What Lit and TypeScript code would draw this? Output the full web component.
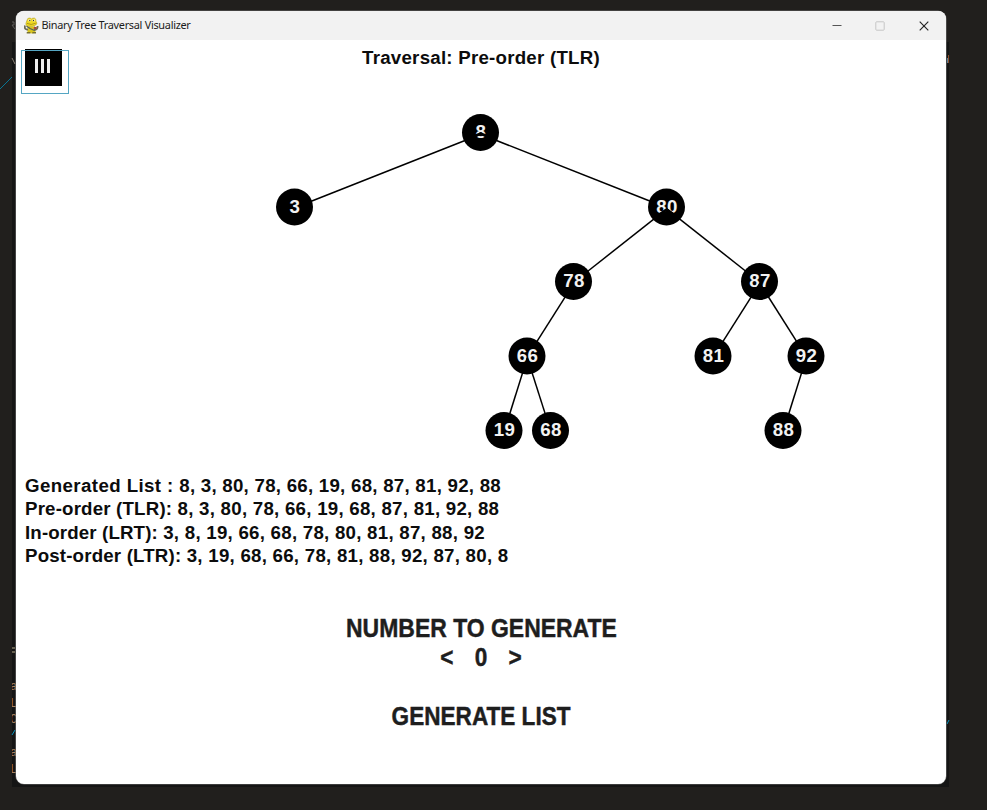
import { LitElement, html, svg, css } from "lit";
import { customElement } from "lit/decorators.js";

interface TreeNode {
  value: number;
  x: number;
  y: number;
  parent?: number;
}

const NODES: TreeNode[] = [
  { value: 8, x: 464.5, y: 92.5 },
  { value: 3, x: 278.5, y: 167, parent: 0 },
  { value: 80, x: 650.5, y: 167, parent: 0 },
  { value: 78, x: 557.5, y: 241.5, parent: 2 },
  { value: 87, x: 743.5, y: 241.5, parent: 2 },
  { value: 66, x: 511, y: 316, parent: 3 },
  { value: 81, x: 697, y: 316, parent: 4 },
  { value: 92, x: 790, y: 316, parent: 4 },
  { value: 19, x: 488, y: 390.5, parent: 5 },
  { value: 68, x: 534.5, y: 390.5, parent: 5 },
  { value: 88, x: 767, y: 390.5, parent: 7 },
];

@customElement("title-bar")
class TitleBar extends LitElement {
  static styles = css`
    :host { display: flex; align-items: center; height: 29px; background: #f2f2f2; font-family: "Noto Sans", sans-serif; }
    .logo { width: 15px; height: 17px; margin-left: 8px; }
    .title { flex: 1; margin: -2px 0 0 2.5px; font-size: 10.9px; letter-spacing: -0.29px; color: #1b1b1b; white-space: pre; }
    .controls { display: flex; margin-right: .5px; }
    .control { width: 43.5px; height: 29px; display: grid; place-items: center; }
  `;
  render() {
    return html`
      <svg class="logo" viewBox="0 0 15 17">
        <path d="M3.5 9.5L11 9.5L11.5 15.5L8 16.5L3.5 15.5Z" fill="#d8c51f"/>
        <path d="M1 8.5Q0 13 4 12.5M10 13Q14 13 13.5 9" fill="none" stroke="#6b6a55" stroke-width="1.8"/>
        <path d="M2.5 9L6 11.5L10.5 13.5" fill="none" stroke="#55605a" stroke-width="1.3"/>
        <path d="M10 9.8L13 10.3L12.4 12.2L9.6 11.7Z" fill="#a8483f"/>
        <path d="M3 3.2Q3.4.8 5.7 1Q7 1 7.5 2Q8.6.6 10.7 1.2Q12.5 2 11.9 4.2Q14 6.2 11.8 8Q9 10 4.5 9.3Q.9 8.6 2.2 5.6Z" fill="#efd922" stroke="#a6951d" stroke-width=".5"/>
        <path d="M3 6.4Q7 8.6 11.8 6.2" fill="none" stroke="#a4921c" stroke-width=".9"/>
        <circle cx="5.5" cy="3.3" r="1.3" fill="#fbf3a4"/><circle cx="9.8" cy="3.3" r="1.3" fill="#fbf3a4"/>
        <circle cx="5.8" cy="3.5" r=".65" fill="#333"/><circle cx="9.5" cy="3.5" r=".65" fill="#333"/>
        <path d="M2.7 15.8H6.4M8.3 15.8H12" stroke="#77702f" stroke-width="1.4"/>
      </svg>
      <div class="title">Binary Tree Traversal Visualizer</div>
      <div class="controls">
        <div class="control"><svg width="10" height="10"><path d="M.5 4.5H9.5" stroke="#555" /></svg></div>
        <div class="control"><svg width="10" height="10"><rect x=".8" y=".8" width="8.4" height="8.4" rx=".8" fill="none" stroke="#c6c6c6"/></svg></div>
        <div class="control"><svg width="10" height="10"><path d="M.7.7L9.3 9.3M9.3.7L.7 9.3" stroke="#252525" stroke-width="1.15"/></svg></div>
      </div>
    `;
  }
}

@customElement("tree-view")
class TreeView extends LitElement {
  static styles = css`
    :host { display: block; height: 426px; }
    svg { display: block; }
    .value { font: bold 18.7px "Liberation Sans", sans-serif; fill: #f2f2f2; text-anchor: middle; letter-spacing: .3px; }
    .edge { stroke: #000; stroke-width: 1.5; }
    .joint { fill: none; stroke: #000; stroke-width: 2.6; }
  `;
  render() {
    return html`<svg width="930" height="426">
      ${NODES.map((n) => svg`<circle cx=${n.x} cy=${n.y} r="18.5"/>
        <text class="value" x=${n.x + 0.4} y=${n.y + 5.6}>${n.value}</text>`)}
      ${NODES.map((n) => {
        if (n.parent === undefined) return null;
        const p = NODES[n.parent];
        const dx = n.x - p.x, dy = n.y - p.y - 1, len = Math.hypot(dx, dy);
        const end = 1 - 17 / len;
        return svg`<line class="edge" x1=${p.x + 0.3} y1=${p.y + 1.8} x2=${p.x + 0.3 + dx * end} y2=${p.y + 1.8 + dy * end}/>`;
      })}
      <path class="joint" d="M457 96.5L464.7 93.7L472.5 96.5"/>
      <path class="joint" d="M641 176L650.7 169.5L660 176M647 173H655"/>
    </svg>`;
  }
}

const LISTS = [
  { cls: "wide", label: "Generated List : ", values: "8, 3, 80, 78, 66, 19, 68, 87, 81, 92, 88" },
  { cls: "narrow", label: "Pre-order (TLR): ", values: "8, 3, 80, 78, 66, 19, 68, 87, 81, 92, 88" },
  { cls: "tight", label: "In-order (LRT): ", values: "3, 8, 19, 66, 68, 78, 80, 81, 87, 88, 92" },
  { cls: "narrow", label: "Post-order (LTR): ", values: "3, 19, 68, 66, 78, 81, 88, 92, 87, 80, 8" },
];

@customElement("app-root")
class AppRoot extends LitElement {
  static styles = css`
    :host { display: block; position: relative; width: 987px; height: 810px; overflow: hidden; background: #211f1d; font-family: "Liberation Sans", sans-serif; }
    .backdrop { position: absolute; left: 12px; top: 42px; width: 937px; height: 745px; background: #151515; overflow: hidden; font: 12px "Liberation Mono", monospace; }
    .scrap { position: absolute; left: -2px; color: #a5805f; }
    .window { position: relative; width: 930px; height: 773px; margin: 11px 0 0 16px; border-radius: 8px; overflow: hidden; background: #fff; box-shadow: 0 0 0 .6px #666; }
    .canvas { position: relative; color: #0c0c0c; }
    .heading { position: absolute; left: 0; right: 0; top: 7px; text-align: center; font-weight: bold; font-size: 18.7px; line-height: 22px; letter-spacing: .24px; white-space: pre; }
    .menu { position: absolute; left: 9px; top: 9px; width: 37px; height: 37px; background: #000; display: flex; gap: 3px; padding: 10px 0 0 10px; box-sizing: border-box; }
    .bar { width: 3px; height: 14px; background: #eee; }
    .focus { position: absolute; left: 5px; top: 10px; width: 48px; height: 44px; box-sizing: border-box; border: 1px solid #55a6c3; }
    .lists { padding: 8px 0 0 9px; font-weight: bold; font-size: 18.7px; line-height: 23.3px; }
    .row { white-space: pre; height: 23.3px; }
    .wide { letter-spacing: .4px; }
    .narrow { letter-spacing: .18px; }
    .tight { letter-spacing: .14px; }
    .values { letter-spacing: .25px; }
    .actions { display: flex; flex-direction: column; align-items: center; margin-top: 47px; font-weight: bold; font-size: 25.5px; line-height: 29.2px; color: #1e1e1e; -webkit-text-stroke: .45px #1e1e1e; }
    .squeeze { transform: scaleX(.885); }
    .prompt { transform: scaleX(.9); }
    .counter { display: flex; gap: 24px; }
    .generate { margin-top: 29.2px; }
    .streak { position: absolute; left: 0; top: 74px; overflow: visible; }
  `;
  render() {
    return html`
      <div class="backdrop">
        ${[["a", 638], ["L", 655], ["C", 671], ["a", 704], ["L", 721]].map(
          ([t, y]) => html`<span class="scrap" style="top:${y}px">${t}</span>`
        )}
      </div>
      <svg class="streak" width="987" height="720">
        <path d="M0 15L12 3" stroke="#087594"/>
        <path d="M12 661L15 656M947 650L949 646" stroke="#0794bd"/>
        <path d="M12 -16L15 -10" stroke="#8c8378"/>
        <path d="M12 -52H14V-49H12L15 -45" fill="none" stroke="#5c5b59"/>
        <path d="M12 574H15M12 578H15" stroke="#66604f" stroke-width="2"/>
        <path d="M948.5 -19V-11" stroke="#8a4e2c"/><path d="M947.5 -16V-11" stroke="#5a7d94"/>
      </svg>
      <div class="window">
        <title-bar></title-bar>
        <div class="canvas">
          <div class="heading">Traversal: Pre-order (TLR)</div>
          <div class="menu"><i class="bar"></i><i class="bar"></i><i class="bar"></i></div>
          <div class="focus"></div>
          <tree-view></tree-view>
          <div class="lists">
            ${LISTS.map((l) => html`<div class="row"><span class=${l.cls}>${l.label}</span><span class="values">${l.values}</span></div>`)}
          </div>
          <div class="actions">
            <div class="prompt">NUMBER TO GENERATE</div>
            <div class="squeeze counter"><span>&lt;</span><span>0</span><span>&gt;</span></div>
            <div class="squeeze generate">GENERATE LIST</div>
          </div>
        </div>
      </div>
    `;
  }
}
